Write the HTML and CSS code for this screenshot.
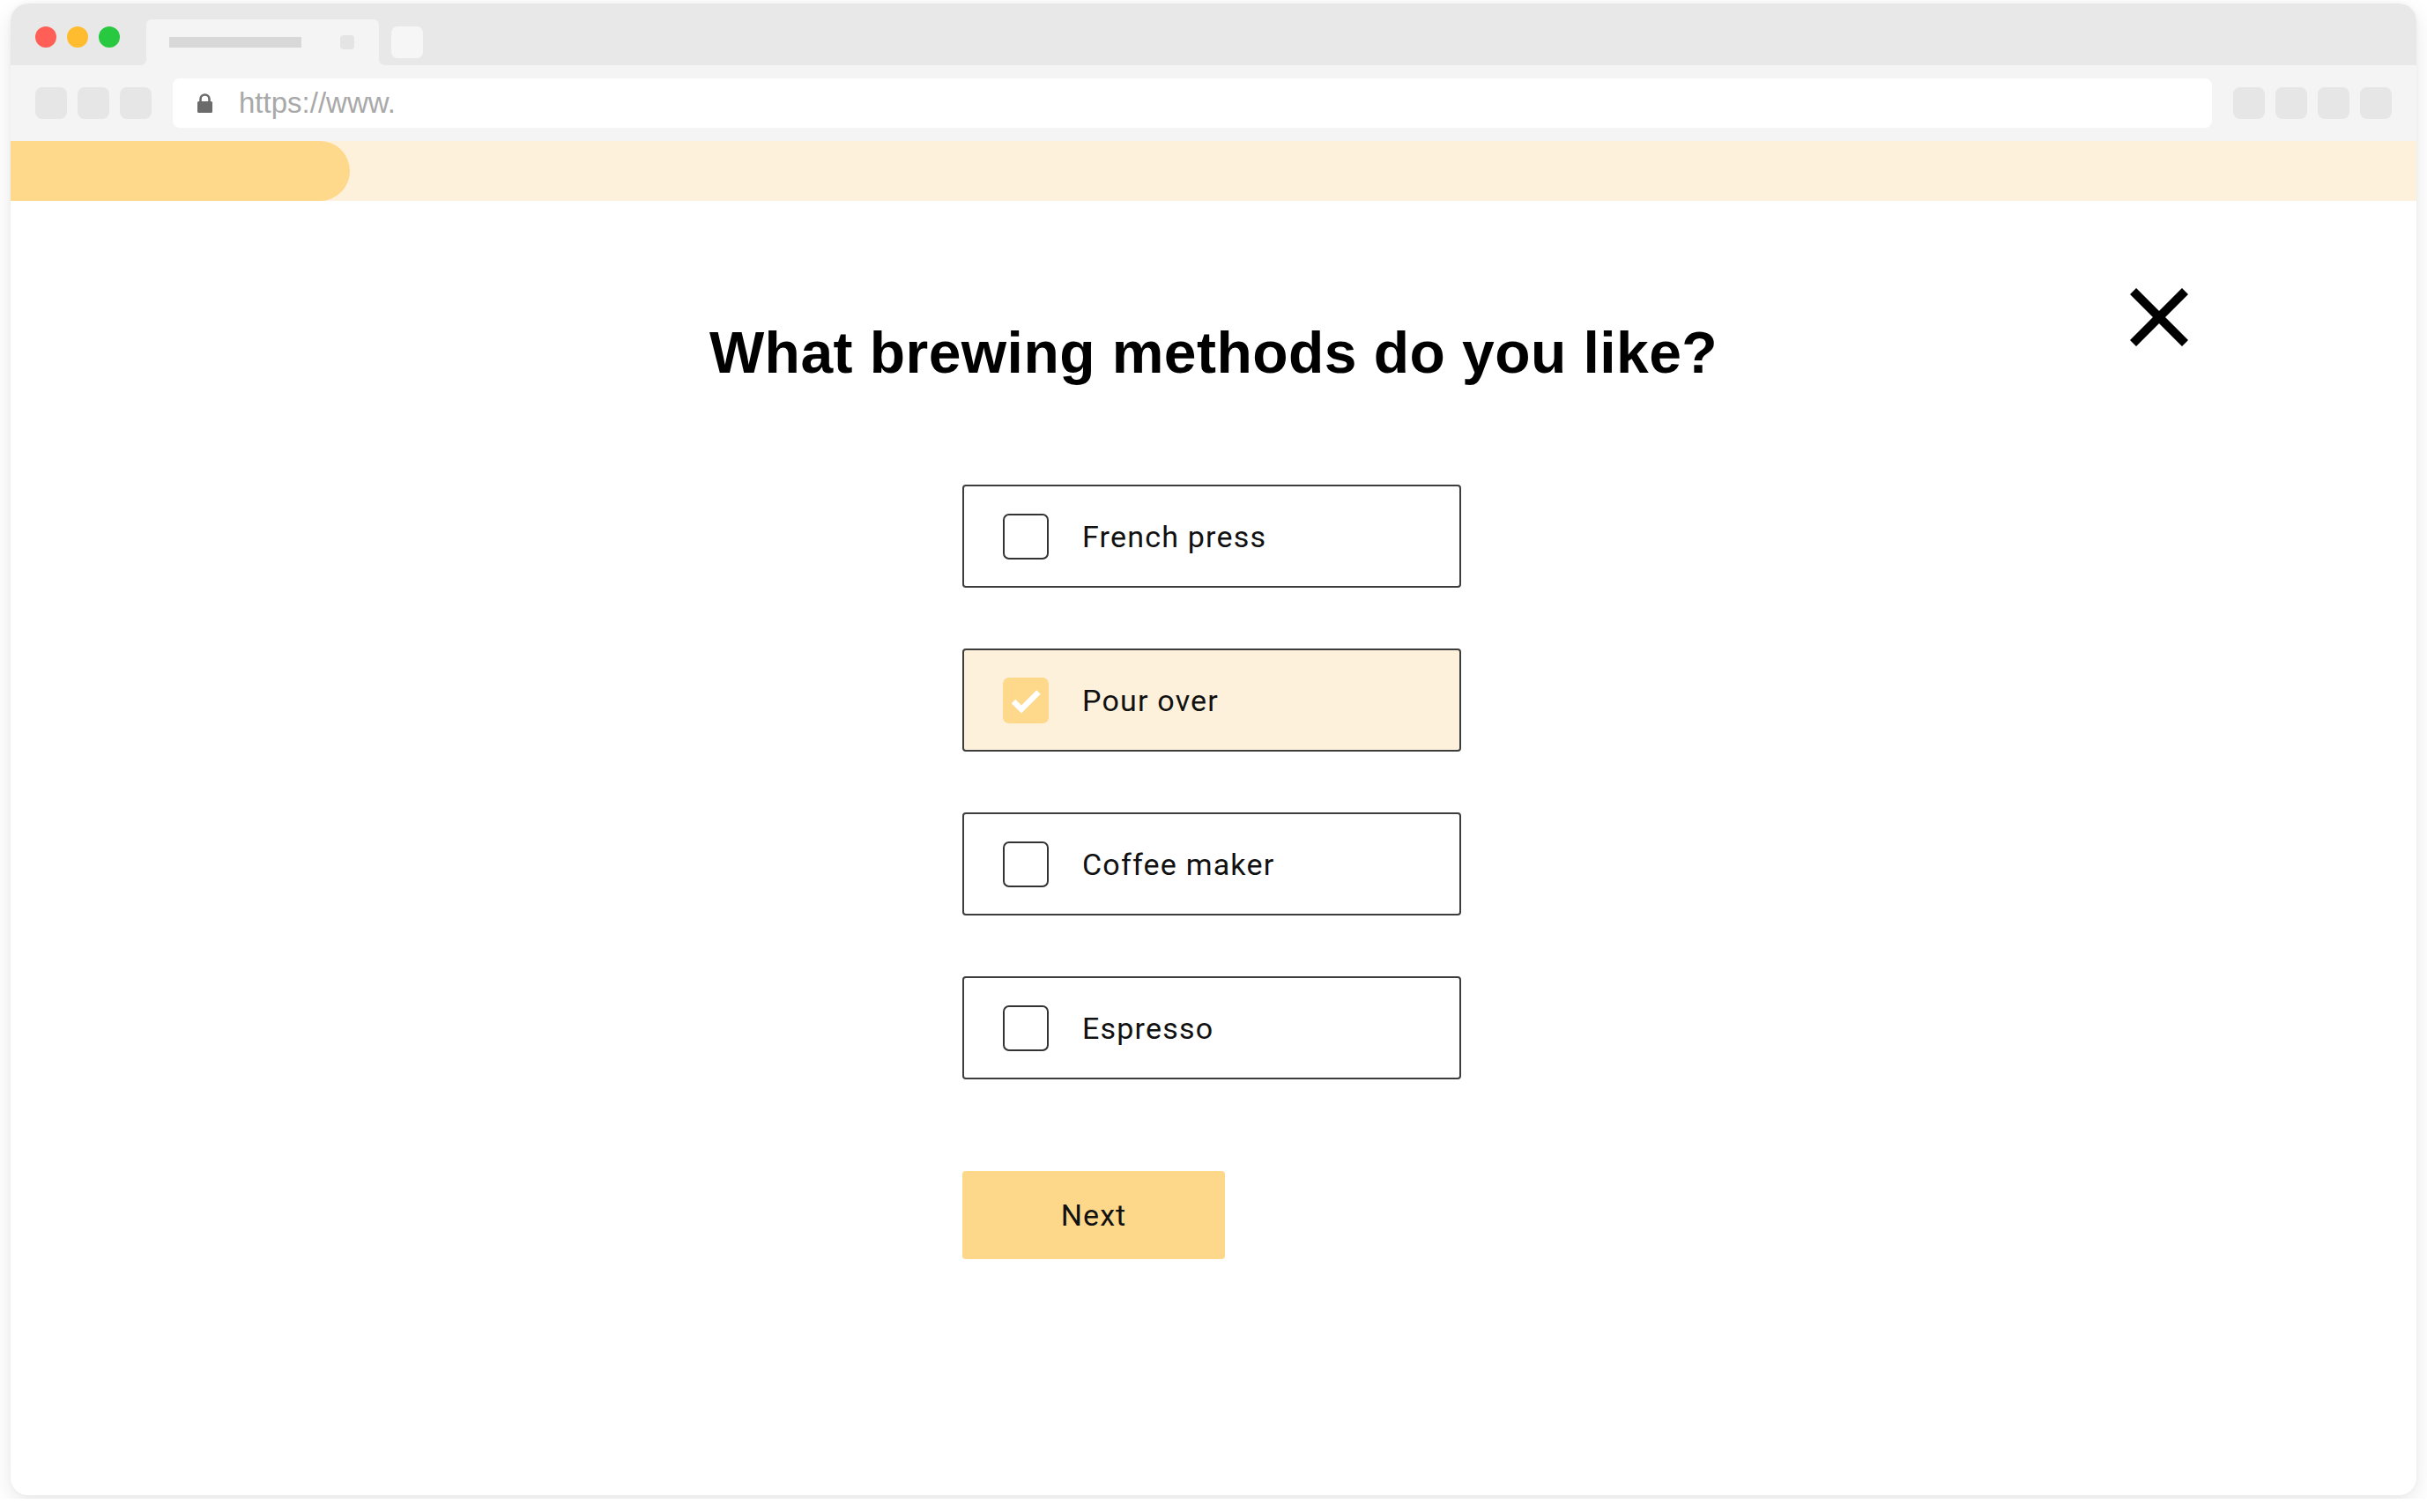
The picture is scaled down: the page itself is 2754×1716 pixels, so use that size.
FILE: index.html
```html
<!DOCTYPE html>
<html lang="en">
<head>
<meta charset="utf-8">
<title>Brewing methods</title>
<link rel="stylesheet" href="styles.css">
</head>
<body>
<div class="window">
  <div class="titlebar">
    <div class="lights">
      <span class="light red"></span>
      <span class="light yellow"></span>
      <span class="light green"></span>
    </div>
    <div class="tab">
      <span class="tab-title"></span>
      <span class="tab-close"></span>
    </div>
    <span class="new-tab"></span>
  </div>
  <div class="toolbar">
    <div class="btn-group">
      <span class="tool-btn"></span>
      <span class="tool-btn"></span>
      <span class="tool-btn"></span>
    </div>
    <div class="url-bar">
      <svg class="lock" width="19" height="22" viewBox="0 0 19 22">
        <path d="M4.5 10V6.5a5 5 0 0 1 10 0V10" fill="none" stroke="#6b6b6b" stroke-width="2.6"/>
        <rect x="1" y="9" width="17" height="13" rx="1.5" fill="#6b6b6b"/>
      </svg>
      <span class="url-text">https://www.</span>
    </div>
    <div class="btn-group">
      <span class="tool-btn"></span>
      <span class="tool-btn"></span>
      <span class="tool-btn"></span>
      <span class="tool-btn"></span>
    </div>
  </div>
  <div class="progress">
    <div class="progress-fill" style="width: 385px"></div>
  </div>
  <main class="content">
    <header class="quiz-header">
      <span class="spacer"></span>
      <h1 class="title">What brewing methods do you like?</h1>
      <button class="close" aria-label="Close">
        <svg width="66" height="66" viewBox="0 0 66 66">
          <path d="M3.5 3.5L62.5 62.5M62.5 3.5L3.5 62.5" stroke="#000" stroke-width="10" fill="none"/>
        </svg>
      </button>
    </header>
    <div class="options">
      <label class="option">
        <span class="checkbox"></span>
        <span class="label">French press</span>
      </label>
      <label class="option selected">
        <span class="checkbox checked">
          <svg width="52" height="52" viewBox="0 0 52 52">
            <path d="M12 27L21 36L40.5 16.5" stroke="#fff" stroke-width="6.5" fill="none"/>
          </svg>
        </span>
        <span class="label">Pour over</span>
      </label>
      <label class="option">
        <span class="checkbox"></span>
        <span class="label">Coffee maker</span>
      </label>
      <label class="option">
        <span class="checkbox"></span>
        <span class="label">Espresso</span>
      </label>
      <button class="next">Next</button>
    </div>
  </main>
</div>
</body>
</html>
```

FILE: styles.css
```css
* {
  box-sizing: border-box;
}

html, body {
  margin: 0;
  background: #ffffff;
}

body {
  padding: 4px 12px;
}

.window {
  width: 2730px;
  height: 1693px;
  border-radius: 20px;
  overflow: hidden;
  background: #ffffff;
  box-shadow: 0 8px 26px rgba(0, 0, 0, 0.09), 0 0 6px rgba(0, 0, 0, 0.04);
  display: flex;
  flex-direction: column;
}

/* Title bar */
.titlebar {
  height: 70px;
  flex: none;
  background: #e8e8e8;
  display: flex;
  align-items: flex-start;
  padding-left: 28px;
}

.lights {
  display: flex;
  gap: 12px;
  margin-top: 26px;
}

.light {
  width: 24px;
  height: 24px;
  border-radius: 50%;
}

.red { background: #ff5f57; }
.yellow { background: #febc2e; }
.green { background: #28c840; }

.tab {
  position: relative;
  margin-left: 30px;
  margin-top: 18px;
  width: 264px;
  height: 52px;
  background: #f4f4f4;
  border-radius: 6px 6px 0 0;
  display: flex;
  align-items: flex-start;
  padding-left: 26px;
}

.tab::before,
.tab::after {
  content: "";
  position: absolute;
  bottom: 0;
  width: 6px;
  height: 6px;
}

.tab::before {
  left: -6px;
  background: radial-gradient(circle at 0 0, transparent 5.5px, #f4f4f4 6px);
}

.tab::after {
  right: -6px;
  background: radial-gradient(circle at 100% 0, transparent 5.5px, #f4f4f4 6px);
}

.tab-title {
  width: 150px;
  height: 12px;
  margin-top: 20px;
  background: #d8d8d8;
}

.tab-close {
  width: 16px;
  height: 16px;
  margin-top: 18px;
  margin-left: 44px;
  border-radius: 4px;
  background: #e4e4e4;
}

.new-tab {
  width: 36px;
  height: 36px;
  margin-top: 26px;
  margin-left: 14px;
  border-radius: 7px;
  background: #f6f6f6;
}

/* Toolbar */
.toolbar {
  height: 86px;
  flex: none;
  background: #f4f4f4;
  display: flex;
  align-items: center;
  padding: 0 28px;
  gap: 24px;
}

.btn-group {
  display: flex;
  gap: 12px;
}

.tool-btn {
  width: 36px;
  height: 36px;
  border-radius: 8px;
  background: #e6e6e6;
}

.url-bar {
  flex: 1;
  height: 56px;
  background: #ffffff;
  border-radius: 8px;
  display: flex;
  align-items: center;
  padding-left: 27px;
  gap: 29px;
}

.lock {
  display: block;
  flex: none;
}

.url-text {
  font-family: "Liberation Sans", Arial, sans-serif;
  font-size: 33px;
  color: #a9a9a9;
}

/* Progress */
.progress {
  height: 68px;
  flex: none;
  background: #fef1dc;
}

.progress-fill {
  height: 100%;
  background: #fed88b;
  border-radius: 0 34px 34px 0;
}

/* Content */
.content {
  flex: 1;
  padding-top: 99px;
  display: flex;
  flex-direction: column;
  align-items: center;
}

.quiz-header {
  width: 100%;
  display: grid;
  grid-template-columns: 1fr auto 1fr;
  align-items: start;
}

.title {
  margin: 40px 0 0;
  font-family: "Liberation Sans", Arial, sans-serif;
  font-weight: 700;
  font-size: 66px;
  line-height: 66px;
  color: #000000;
  letter-spacing: 0.45px;
}

.close {
  justify-self: end;
  margin-right: 259px;
  padding: 0;
  border: 0;
  background: none;
  width: 66px;
  height: 66px;
}

.close svg {
  display: block;
}

.options {
  margin-top: 117px;
  margin-right: 4px;
  width: 566px;
  display: flex;
  flex-direction: column;
  gap: 69px;
}

.option {
  height: 117px;
  border: 2px solid #3d3d3d;
  border-radius: 4px;
  background: #ffffff;
  display: flex;
  align-items: center;
  padding-left: 44px;
}

.option.selected {
  background: #fef1dc;
}

.checkbox {
  width: 52px;
  height: 52px;
  flex: none;
  border: 2px solid #333333;
  border-radius: 7px;
}

.checkbox.checked {
  border: 0;
  background: #fed88b;
}

.checkbox svg {
  display: block;
}

.label {
  margin-left: 38px;
  font-family: Roboto, "Liberation Sans", sans-serif;
  font-size: 34px;
  letter-spacing: 1.2px;
  color: #111111;
}

.next {
  margin-top: 35px;
  align-self: flex-start;
  width: 298px;
  height: 100px;
  border: 0;
  border-radius: 4px;
  background: #fed88a;
  font-family: Roboto, "Liberation Sans", sans-serif;
  font-size: 34px;
  letter-spacing: 1px;
  color: #111111;
  padding: 0;
}
```
